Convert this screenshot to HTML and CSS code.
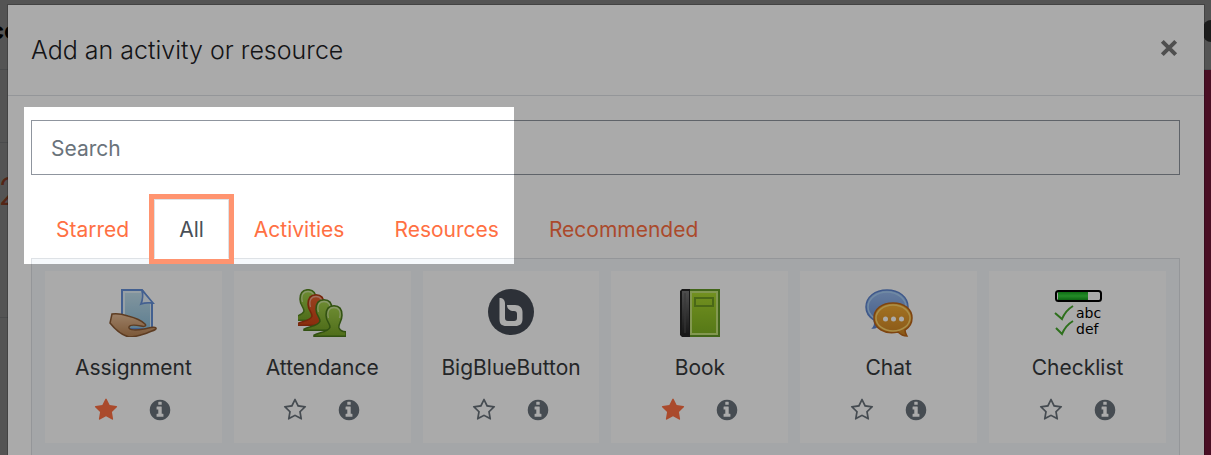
FILE: index.html
```html
<!DOCTYPE html>
<html lang="en">
<head>
<meta charset="utf-8">
<title>Add an activity or resource</title>
<link rel="stylesheet" href="styles.css">
</head>
<body>
<svg class="sprite" aria-hidden="true">
  <defs>
    <symbol id="star" viewBox="0 0 1792 1792"><path d="M1728 647q0 22-26 48l-363 354 86 500q1 7 1 20 0 21-10.500 35.500t-30.500 14.500q-19 0-40-12l-449-236-449 236q-22 12-40 12-21 0-31.500-14.500t-10.500-35.500q0-6 2-20l86-500-364-354q-25-27-25-48 0-37 56-46l502-73 225-455q19-41 49-41t49 41l225 455 502 73q56 9 56 46z"/></symbol>
    <symbol id="star-o" viewBox="0 0 1792 1792"><path d="M1201 1004l306-297-422-62-189-382-189 382-422 62 306 297-73 421 378-199 377 199zm527-357q0 22-26 48l-363 354 86 500q1 7 1 20 0 50-41 50-19 0-40-12l-449-236-449 236q-22 12-40 12-21 0-31.500-14.500t-10.500-35.500q0-6 2-20l86-500-364-354q-25-27-25-48 0-37 56-46l502-73 225-455q19-41 49-41t49 41l225 455 502 73q56 9 56 46z"/></symbol>
    <symbol id="info" viewBox="0 0 1792 1792"><path d="M1152 1376v-160q0-14-9-23t-23-9h-96v-512q0-14-9-23t-23-9h-320q-14 0-23 9t-9 23v160q0 14 9 23t23 9h96v320h-96q-14 0-23 9t-9 23v160q0 14 9 23t23 9h448q14 0 23-9t9-23zm-128-896v-160q0-14-9-23t-23-9h-192q-14 0-23 9t-9 23v160q0 14 9 23t23 9h192q14 0 23-9t9-23zm640 416q0 209-103 385.500t-279.500 279.500-385.500 103-385.500-103-279.500-279.500-103-385.500 103-385.500 279.500-279.500 385.500-103 385.500 103 279.500 279.500 103 385.500z"/></symbol>
    <linearGradient id="paper" x1="0" y1="0" x2="0" y2="1"><stop offset="0" stop-color="#c3e0ed"/><stop offset="1" stop-color="#8fc0dc"/></linearGradient>
    <linearGradient id="skin" x1="0" y1="0" x2="0" y2="1"><stop offset="0" stop-color="#eac09a"/><stop offset="1" stop-color="#b98352"/></linearGradient>
    <linearGradient id="green" x1="0" y1="0" x2="0" y2="1"><stop offset="0" stop-color="#a5d24c"/><stop offset="1" stop-color="#78a528"/></linearGradient>
    <linearGradient id="red" x1="0" y1="0" x2="0" y2="1"><stop offset="0" stop-color="#e5622f"/><stop offset="1" stop-color="#d04514"/></linearGradient>
    <linearGradient id="cover" x1="0" y1="0" x2="0" y2="1"><stop offset="0" stop-color="#aedb30"/><stop offset="1" stop-color="#7fb322"/></linearGradient>
    <linearGradient id="spine" x1="0" y1="0" x2="0" y2="1"><stop offset="0" stop-color="#777"/><stop offset="1" stop-color="#222"/></linearGradient>
    <linearGradient id="blue" x1="0" y1="0" x2="0" y2="1"><stop offset="0" stop-color="#9bbdf0"/><stop offset="1" stop-color="#6088cf"/></linearGradient>
    <linearGradient id="amber" x1="0" y1="0" x2="0" y2="1"><stop offset="0" stop-color="#f5ae35"/><stop offset="1" stop-color="#cf8424"/></linearGradient>
    <linearGradient id="bar" x1="0" y1="0" x2="0" y2="1"><stop offset="0" stop-color="#17a51f"/><stop offset=".5" stop-color="#36d23c"/><stop offset="1" stop-color="#15981d"/></linearGradient>
    <g id="person"><path d="M0 31.200v-1c6-3 14-3 16-8 0-4-4-6-4-12 0-6 3-9.500 8-9.500s8 3.500 8 9.500c0 6-4 9-3 12.500 1 3 3 4 7 4v4.500z"/><path d="M14.500 13c-2-7 1-10.500 5.500-10.500s7.500 3.500 5.500 10.500" fill="none" stroke="#ffffff77" stroke-width="1.300"/></g>
  </defs>
</svg>
<div class="page">
  <div class="site-header"><span class="site-name">co</span><span class="site-badge"></span></div>
  <div class="site-main">
    <div class="site-content">
      <div class="site-row"></div>
      <div class="site-row site-row-tall"><span class="site-number">2</span></div>
      <div class="site-rest"></div>
    </div>
    <div class="site-edge"></div>
  </div>

  <div class="backdrop">
    <section class="modal" role="dialog" aria-labelledby="title">
      <header class="modal-header">
        <h1 class="modal-title" id="title">Add an activity or resource</h1>
        <button class="close" type="button" aria-label="Close"><svg width="18" height="18" viewBox="0 0 18 18"><path d="M2.300 2.300l13.400 13.400M15.700 2.300L2.300 15.700"/></svg></button>
      </header>
      <div class="modal-body">
        <input class="search" type="search" placeholder="Search" aria-label="Search">
        <nav class="tabs">
          <a class="tab" href="#starred">Starred</a>
          <a class="tab tab-active" href="#all" aria-current="true">All</a>
          <a class="tab" href="#activities">Activities</a>
          <a class="tab" href="#resources">Resources</a>
          <a class="tab" href="#recommended">Recommended</a>
        </nav>
        <div class="panel">
          <article class="card">
            <svg class="logo" viewBox="0 0 48 48"><path d="M13 1h20l10 13v26H13z" fill="#e2f1f8" stroke="#6590d8" stroke-width="2"/><path d="M16 4h16v11h9v24H16z" fill="url(#paper)"/><path d="M33 1c1 5 1 9-1 14 5-2 8-1 12-1z" fill="#e8f2fa" stroke="#6590d8" stroke-width="1.800"/><path d="M3 25c5-1 10 0 16 2 8 2 14 5 17 8 2 2-1 3-4 2-5-1-11-2-12 1-1 4 9 3 15 2 5-1 10-3 12-1 1 2-5 3-9 5-6 2-10 4-18 4C12 46 5 39 1 34z" fill="url(#skin)" stroke="#8c5b34" stroke-width="1.500"/></svg>
            <h2 class="name">Assignment</h2>
            <div class="actions"><button class="action starred" type="button" aria-label="Unstar Assignment"><svg><use href="#star"/></svg></button><button class="action" type="button" aria-label="About Assignment"><svg><use href="#info"/></svg></button></div>
          </article>
          <article class="card">
            <svg class="logo" viewBox="0 0 48 48"><g stroke-width="1.500"><use href="#person" x="-10" y="0" fill="url(#green)" stroke="#578820"/><use href="#person" x="-2" y="5" fill="url(#red)" stroke="#b03a12"/><use href="#person" x="6" y="10" fill="url(#green)" stroke="#4b7a1c"/><use href="#person" x="16" y="16" fill="url(#green)" stroke="#4b7a1c"/></g></svg>
            <h2 class="name">Attendance</h2>
            <div class="actions"><button class="action" type="button" aria-label="Star Attendance"><svg><use href="#star-o"/></svg></button><button class="action" type="button" aria-label="About Attendance"><svg><use href="#info"/></svg></button></div>
          </article>
          <article class="card">
            <svg class="logo" viewBox="0 0 48 48"><circle cx="24" cy="23" r="23" fill="#444a54"/><path d="M12.500 9c3.500 0 5.500 2 5.500 5.500V29c0 2 1 3 3 3h6c2 0 3-1 3-3v-4c0-2-1-3-3-3-4 0-7-2-7-6h8c5 0 7.500 3 7.500 7v7c0 5-3 7-7 7h-9c-5 0-7-2-7-7z" fill="#fff"/></svg>
            <h2 class="name">BigBlueButton</h2>
            <div class="actions"><button class="action" type="button" aria-label="Star BigBlueButton"><svg><use href="#star-o"/></svg></button><button class="action" type="button" aria-label="About BigBlueButton"><svg><use href="#info"/></svg></button></div>
          </article>
          <article class="card">
            <svg class="logo" viewBox="0 0 48 48"><path d="M14 1h29v46H14z" fill="url(#cover)" stroke="#639a26" stroke-width="2"/><path d="M15 3h26v42H15z" fill="none" stroke="#c5e47a" stroke-width="2"/><path d="M19 9h18v8H19z" fill="none" stroke="#6f9d23" stroke-width="2"/><path d="M14 0v48H6l-2-2V2l2-2z" fill="#242424"/><path d="M6 2h7v44H6z" fill="url(#spine)"/><path d="M9 4v40" stroke="#555"/></svg>
            <h2 class="name">Book</h2>
            <div class="actions"><button class="action starred" type="button" aria-label="Unstar Book"><svg><use href="#star"/></svg></button><button class="action" type="button" aria-label="About Book"><svg><use href="#info"/></svg></button></div>
          </article>
          <article class="card">
            <svg class="logo" viewBox="0 0 48 48"><path d="M22 1c12 0 21 7 21 17S34 35 22 35c-3 0-6-1-8-1-1 3-3 5-6 5 2-2 2-5 1-8-5-3-8-7-8-13C1 8 10 1 22 1z" fill="url(#blue)" stroke="#5d85d0" stroke-width="1.500"/><ellipse cx="22" cy="18" rx="19" ry="15" fill="none" stroke="#a9d0f6" stroke-width="1.500"/><path d="M28 14c11 0 19 6 19 15 0 5-2 9-7 12 0 3 1 4 2 6-4 0-7-2-9-4-14 3-24-4-24-14 0-9 8-15 19-15z" fill="url(#amber)" stroke="#bd6718" stroke-width="1.500"/><ellipse cx="28" cy="29" rx="17" ry="13" fill="none" stroke="#ffd56c" stroke-width="1.500"/><g fill="#fff"><circle cx="20.500" cy="30" r="2.500"/><circle cx="28.500" cy="30" r="2.500"/><circle cx="36.500" cy="30" r="2.500"/></g></svg>
            <h2 class="name">Chat</h2>
            <div class="actions"><button class="action" type="button" aria-label="Star Chat"><svg><use href="#star-o"/></svg></button><button class="action" type="button" aria-label="About Chat"><svg><use href="#info"/></svg></button></div>
          </article>
          <article class="card">
            <svg class="logo" viewBox="0 0 48 48"><rect x="2" y="2" width="45" height="10" rx="2.500" fill="#fff" stroke="#000" stroke-width="2"/><path d="M4 3h30v8H4z" fill="url(#bar)"/><g fill="none" stroke="#45a82b" stroke-width="2"><path d="M1 24l7 6c2-5 6-10 11-13M2 39l6 6c2-5 6-10 11-13"/></g><g class="logo-text"><text x="22" y="29">abc</text><text x="22" y="45">def</text></g></svg>
            <h2 class="name">Checklist</h2>
            <div class="actions"><button class="action" type="button" aria-label="Star Checklist"><svg><use href="#star-o"/></svg></button><button class="action" type="button" aria-label="About Checklist"><svg><use href="#info"/></svg></button></div>
          </article>
        </div>
        <div class="spotlight"></div>
      </div>
    </section>
  </div>
</div>
</body>
</html>
```
FILE: styles.css
```css
* { box-sizing: border-box; }
html, body { height: 100%; }
body { margin: 0; overflow: hidden; font-family: Inter, "Liberation Sans", sans-serif; font-size: 21px; line-height: 32px; color: #373a3c; }
h1, h2 { margin: 0; font-weight: 400; }
button { border: 0; padding: 0; background: none; font: inherit; color: inherit; cursor: pointer; }
.sprite { position: absolute; width: 0; height: 0; }

.page { position: relative; min-height: 100vh; display: flex; flex-direction: column; overflow: hidden; background: #fff; }
.site-header { display: flex; align-items: center; justify-content: space-between; height: 70px; padding-bottom: 8px; border-bottom: 1px solid #dee2e6; }
.site-name { margin-left: -10px; color: #000; font-size: 24px; font-weight: 700; }
.site-badge { width: 8px; height: 22px; border-radius: 8px 0 0 8px; background: #555; }
.site-main { flex: 1; display: flex; }
.site-content { flex: 1; }
.site-edge { width: 8px; background: #de2d6f; }
.site-row { height: 73px; border-bottom: 1px solid #dee2e6; }
.site-row-tall { height: 175px; padding-top: 32px; }
.site-number { margin-left: -2px; color: #ff7043; font-size: 38px; font-weight: 300; }

.backdrop { position: absolute; inset: 0; padding: 4px 6px 0 7px; background: rgba(0, 0, 0, .5); }
.modal { min-height: 100vh; background: #fff; background-clip: padding-box; border: 1px solid rgba(0, 0, 0, .2); }
.modal-header { display: flex; align-items: center; justify-content: space-between; height: 91px; padding: 0 24px 0 23px; border-bottom: 1px solid #dee2e6; }
.modal-title { font-size: 25px; font-weight: 300; line-height: 40px; color: #1d2125; }
.close { display: flex; padding: 0 2px 4px; }
.close path { fill: none; stroke: #777; stroke-width: 4; }

.modal-body { position: relative; padding: 24px 24px 24px 23px; }
.search { display: block; width: 100%; height: 55px; padding: 2px 19px 0; border: 1px solid #8f959e; border-radius: 0; background: #fff; font: inherit; color: #495057; appearance: none; }
.search::placeholder { color: #6a737b; opacity: 1; }
.tabs { display: flex; margin-top: 24px; }
.tab { height: 60px; margin-bottom: -1px; padding: 14px 24px; border: 1px solid transparent; color: #ff7043; text-decoration: none; }
.tab-active { position: relative; z-index: 1; border-color: #dee2e6 #dee2e6 #fff; background: #fff; color: #495057; }
.tab-active::after { content: ""; position: absolute; inset: -6px; border: 5px solid #ff9470; }
.panel { display: grid; grid-template-columns: repeat(6, 1fr); gap: 12px; padding: 12px 13px; border: 1px solid #dee2e6; background: #f6f9fc; }
.card { display: flex; flex-direction: column; align-items: center; height: 172px; padding-top: 18px; background: #fff; }
.logo { width: 48px; height: 48px; }
.logo-text { font-family: "DejaVu Sans", sans-serif; font-size: 14px; fill: #000; }
.name { margin-top: 15px; font-size: 21px; line-height: 32px; }
.actions { display: flex; gap: 30px; margin-top: 14px; }
.action { display: flex; color: #6a737b; }
.action svg { width: 24px; height: 24px; fill: currentColor; }
.starred { color: #ff7043; }
.spotlight { position: absolute; z-index: 2; top: 11px; left: 16px; width: 490px; height: 157px; box-shadow: 0 0 0 2000px rgba(0, 0, 0, .333); pointer-events: none; }
```
